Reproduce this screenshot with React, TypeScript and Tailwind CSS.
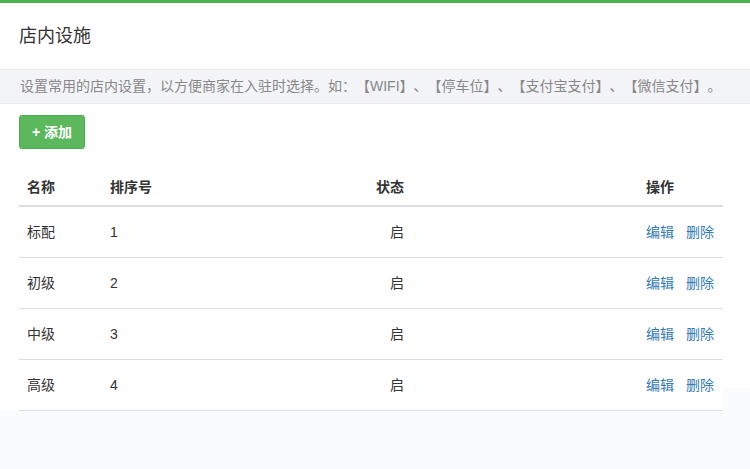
import { useState } from "react";

// 店内设施列表
const facilities = [
  { id: 1, name: "标配", sort: 1, status: "启" },
  { id: 2, name: "初级", sort: 2, status: "启" },
  { id: 3, name: "中级", sort: 3, status: "启" },
  { id: 4, name: "高级", sort: 4, status: "启" },
];

const cols = "grid grid-cols-[83px_250px_60px_226px_85px]";

export default function App() {
  const [rows] = useState(facilities);

  return (
    <div
      className="min-h-screen w-full bg-[#f9fbfd] text-[#333] [text-spacing-trim:space-all]"
      style={{ fontFamily: '"Liberation Sans", "Noto Sans CJK SC", sans-serif' }}
    >
      <div className="h-[388px] border-t-[3px] border-[#4caf50] bg-white">
        <div className="flex h-[66px] items-center px-[19px] text-[18px]">店内设施</div>

        <div className="flex h-[35px] items-center border-y border-[#e8eaee] bg-[#f3f4f8] px-[20px] text-[14px] text-[#888] whitespace-nowrap">
          设置常用的店内设置，以方便商家在入驻时选择。如：【WIFI】、【停车位】、【支付宝支付】、【微信支付】。
        </div>

        <div className="w-[723px] bg-white pl-[19px]">
          <button className="mt-[11px] flex h-[34px] w-[66px] items-center justify-center rounded-[3px] border border-[#4cae4c] bg-[#5cb85c] text-[14px] font-bold text-white">
            + 添加
          </button>

          <div className="mt-[20px] w-[704px] bg-white text-[14px]">
            <div className={`${cols} h-[38px] items-center border-b-2 border-[#ddd] font-bold`}>
              <div className="px-2">名称</div>
              <div className="px-2">排序号</div>
              <div className="px-2 text-right">状态</div>
              <div></div>
              <div className="px-2">操作</div>
            </div>
            {rows.map((r) => (
              <div key={r.id} className={`${cols} h-[51px] items-center border-b border-[#ddd]`}>
                <div className="px-2">{r.name}</div>
                <div className="px-2">{r.sort}</div>
                <div className="px-2 text-right">{r.status}</div>
                <div></div>
                <div className="flex gap-3 px-2 text-[#337ab7]">
                  <a href="#">编辑</a>
                  <a href="#">删除</a>
                </div>
              </div>
            ))}
          </div>
        </div>
      </div>
    </div>
  );
}
